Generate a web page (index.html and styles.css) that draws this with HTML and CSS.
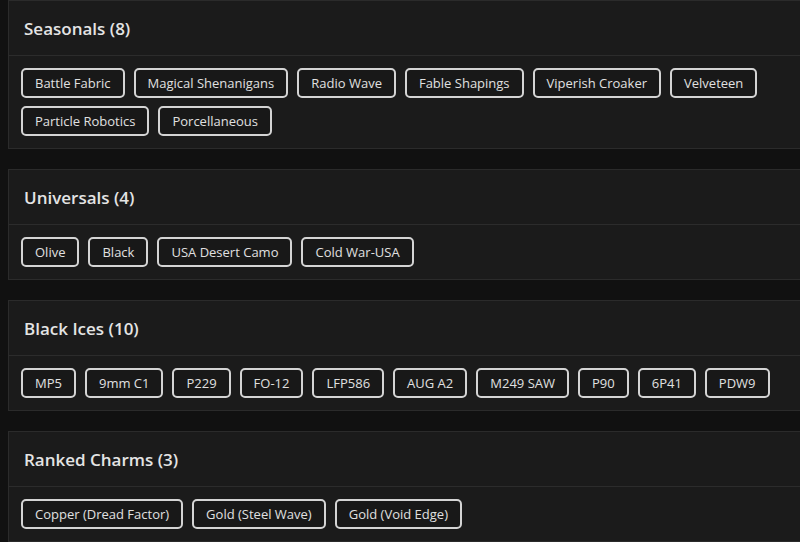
FILE: index.html
```html
<!DOCTYPE html>
<html lang="en">
<head>
  <meta charset="UTF-8" />
  <title>Unlocks</title>
  <link rel="stylesheet" href="styles.css">
</head>
<body>
  <section class="group">
    <h3 class="group-title">Seasonals (8)</h3>
    <div class="chips">
      <span class="chip">Battle Fabric</span>
      <span class="chip">Magical Shenanigans</span>
      <span class="chip">Radio Wave</span>
      <span class="chip">Fable Shapings</span>
      <span class="chip">Viperish Croaker</span>
      <span class="chip">Velveteen</span>
      <span class="chip">Particle Robotics</span>
      <span class="chip">Porcellaneous</span>
    </div>
  </section>

  <section class="group">
    <h3 class="group-title">Universals (4)</h3>
    <div class="chips">
      <span class="chip">Olive</span>
      <span class="chip">Black</span>
      <span class="chip">USA Desert Camo</span>
      <span class="chip">Cold War-USA</span>
    </div>
  </section>

  <section class="group">
    <h3 class="group-title">Black Ices (10)</h3>
    <div class="chips">
      <span class="chip">MP5</span>
      <span class="chip">9mm C1</span>
      <span class="chip">P229</span>
      <span class="chip">FO-12</span>
      <span class="chip">LFP586</span>
      <span class="chip">AUG A2</span>
      <span class="chip">M249 SAW</span>
      <span class="chip">P90</span>
      <span class="chip">6P41</span>
      <span class="chip">PDW9</span>
    </div>
  </section>

  <section class="group">
    <h3 class="group-title">Ranked Charms (3)</h3>
    <div class="chips">
      <span class="chip">Copper (Dread Factor)</span>
      <span class="chip">Gold (Steel Wave)</span>
      <span class="chip">Gold (Void Edge)</span>
    </div>
  </section>
</body>
</html>
```

FILE: styles.css
```css
* {
  box-sizing: border-box;
}

body {
  margin: 0;
  padding: 0 0 0 8px;
  background: #111111;
  font-family: "Open Sans", "DejaVu Sans", sans-serif;
  color: #e2e2e2;
}

.group {
  background: #1b1b1b;
  border: 1px solid #2b2b2b;
  border-right: none;
  margin-bottom: 20px;
}

.group-title {
  margin: 0;
  height: 55px;
  display: flex;
  align-items: center;
  padding: 0 15px;
  font-size: 17px;
  font-weight: 600;
  color: #e4e4e4;
  border-bottom: 1px solid #2c2c2c;
}

.chips {
  display: flex;
  flex-wrap: wrap;
  gap: 8px 9px;
  padding: 12px;
}

.chip {
  display: flex;
  align-items: center;
  height: 30px;
  padding: 0 12px;
  border: 2px solid #d4d4d4;
  border-radius: 5px;
  background: #181818;
  font-size: 13px;
  color: #e0e0e0;
  white-space: nowrap;
}
```
